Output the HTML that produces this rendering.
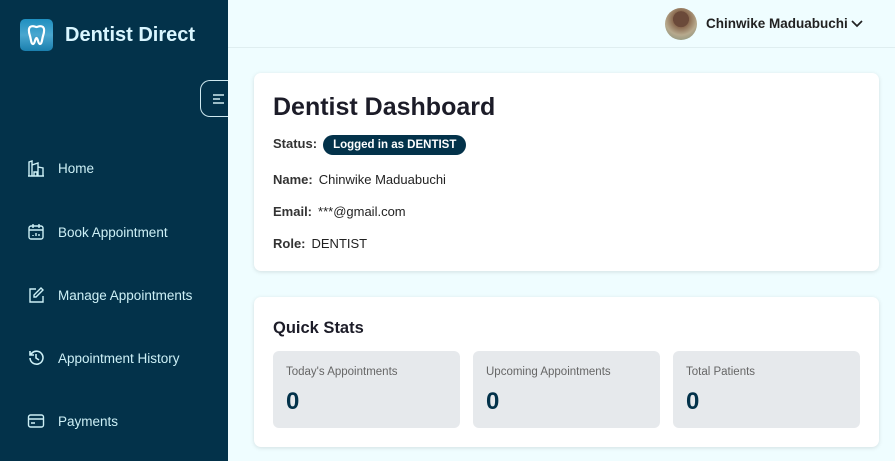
<!DOCTYPE html>
<html><head><meta charset="utf-8"><style>
*{box-sizing:border-box;margin:0;padding:0}
body{width:895px;height:461px;overflow:hidden;background:#effdff;font-family:"Liberation Sans",sans-serif;position:relative}
.side{position:absolute;left:0;top:0;width:228px;height:461px;background:#03324a;overflow:hidden}
.logo{position:absolute;left:20px;top:19px;width:33px;height:32px;border-radius:5px;background:linear-gradient(#1f8fc0,#4aa7cf 50%,#1a7fae)}
.brand{position:absolute;left:65px;top:24px;color:#d9f6ff;font-weight:bold;font-size:20px}
.tog{position:absolute;left:200px;top:80px;width:32px;height:37px;border:1.5px solid #cfe9f0;border-right:none;border-radius:10px 0 0 10px;background:#03324a}
.nav{position:absolute;left:27px;color:#cdf0f6;font-size:13.5px;display:flex;align-items:center}
.nav svg{width:18px;height:18px;margin-right:13px}
.hdr{position:absolute;left:228px;top:0;right:0;height:48px;border-bottom:1px solid #dfeef0}
.av{position:absolute;left:665px;top:8px;width:32px;height:32px;border-radius:50%;background:radial-gradient(circle at 50% 35%,#6b4a3a 30%,#8a6a50 31%,#b7a98d 60%,#7c8f7a)}
.uname{position:absolute;left:706px;top:16px;font-weight:bold;font-size:13.5px;color:#222}
.card{position:absolute;left:254px;width:625px;background:#fff;border-radius:7px;box-shadow:0 1px 4px rgba(0,0,0,.12)}
h1{position:absolute;left:19px;top:20px;font-size:25px;color:#1c1c28}
.row{position:absolute;left:19px;font-size:13px;color:#222}
.row b{margin-right:6px;color:#333}
.pill{display:inline-block;background:#03324a;color:#fff;font-weight:bold;font-size:11.5px;padding:4px 10px;border-radius:11px}
.stat{position:absolute;top:54px;width:187px;height:77px;background:#e6e9ec;border-radius:6px}
.stat span{position:absolute;left:13px;top:15px;font-size:11.5px;color:#666}
.stat b{position:absolute;left:13px;top:37px;font-size:24px;color:#03324a}
</style></head><body>
<div class="side">
<div class="logo"><svg viewBox="0 0 33 32" width="33" height="32"><path d="M10 8c3-2 5 0 6.5 0S20 6 23 8c2 2 1 6 0 9-1 3-1 8-3 8s-2-6-3.5-6S15 25 13 25s-2-5-3-8c-1-3-2-7 0-9z" fill="none" stroke="#fff" stroke-width="2.2"/></svg></div>
<div class="brand">Dentist Direct</div>
<div class="tog"><svg width="14" height="12" viewBox="0 0 14 12" style="position:absolute;left:11px;top:12px"><path d="M1 2h11M1 6h7M1 10h11" stroke="#cfe9f0" stroke-width="1.4"/></svg></div>
<div class="nav" style="top:159px"><svg viewBox="0 0 18 18" fill="none" stroke="#cdf0f6" stroke-width="1.4"><path d="M2 17V3l3-1v15M5 6l6-2v13M11 8l5 1v8M1 17h16M7 17v-4h3v4"/></svg>Home</div>
<div class="nav" style="top:223px"><svg viewBox="0 0 18 18" fill="none" stroke="#cdf0f6" stroke-width="1.4"><rect x="2" y="3" width="14" height="13" rx="2"/><path d="M2 7h14M6 1v4M12 1v4M6 13v-1M9 13v-3M12 13v-2"/></svg>Book Appointment</div>
<div class="nav" style="top:286px"><svg viewBox="0 0 18 18" fill="none" stroke="#cdf0f6" stroke-width="1.4"><path d="M9 3H3v13h13v-6M14 2l2 2-7 7H7V9z"/></svg>Manage Appointments</div>
<div class="nav" style="top:349px"><svg viewBox="0 0 18 18" fill="none" stroke="#cdf0f6" stroke-width="1.6"><path d="M3 9a6.5 6.5 0 1 0 2-5L3 6M3 2v4h4M9 5v4l3 2"/></svg>Appointment History</div>
<div class="nav" style="top:412px"><svg viewBox="0 0 18 18" fill="none" stroke="#cdf0f6" stroke-width="1.4"><rect x="1.5" y="3" width="15" height="12" rx="2"/><path d="M1.5 7h15M4 11h4"/></svg>Payments</div>
</div>
<div class="hdr"></div>
<div class="av"></div>
<div class="uname">Chinwike Maduabuchi</div>
<svg style="position:absolute;left:851px;top:19px" width="12" height="9" viewBox="0 0 12 9"><path d="M1 2l5 5 5-5" fill="none" stroke="#222" stroke-width="1.7"/></svg>
<div class="card" style="top:73px;height:198px">
<h1>Dentist Dashboard</h1>
<div class="row" style="top:62px"><b>Status:</b><span class="pill">Logged in as DENTIST</span></div>
<div class="row" style="top:99px"><b>Name:</b>Chinwike Maduabuchi</div>
<div class="row" style="top:131px"><b>Email:</b>***@gmail.com</div>
<div class="row" style="top:163px"><b>Role:</b>DENTIST</div>
</div>
<div class="card" style="top:297px;height:150px">
<div style="position:absolute;left:19px;top:22px;font-weight:bold;font-size:16.5px;color:#1c1c28">Quick Stats</div>
<div class="stat" style="left:19px"><span>Today's Appointments</span><b>0</b></div>
<div class="stat" style="left:219px"><span>Upcoming Appointments</span><b>0</b></div>
<div class="stat" style="left:419px"><span>Total Patients</span><b>0</b></div>
</div>
</body></html>
